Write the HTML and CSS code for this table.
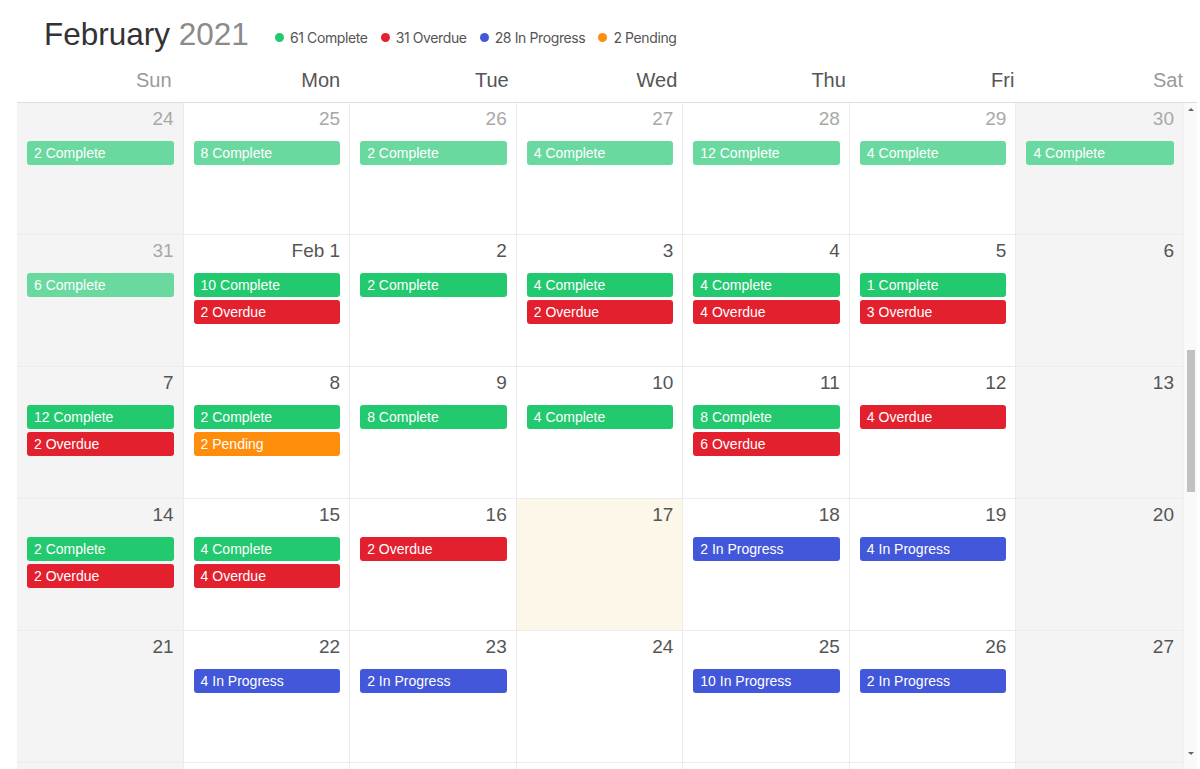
FILE: index.html
```html
<!DOCTYPE html>
<html lang="en">
<head>
<meta charset="utf-8">
<title>February 2021</title>
<link rel="stylesheet" href="styles.css">
</head>
<body>
<div class="app">
  <header class="top">
    <h1 class="title">February <span class="year">2021</span></h1>
    <ul class="legend">
      <li><span class="dot complete"></span>61 Complete</li>
      <li><span class="dot overdue"></span>31 Overdue</li>
      <li><span class="dot progress"></span>28 In Progress</li>
      <li><span class="dot pending"></span>2 Pending</li>
    </ul>
  </header>
  <div class="calendar">
    <div class="dow">
      <div class="dname weekend">Sun</div>
      <div class="dname">Mon</div>
      <div class="dname">Tue</div>
      <div class="dname">Wed</div>
      <div class="dname">Thu</div>
      <div class="dname">Fri</div>
      <div class="dname weekend">Sat</div>
    </div>
    <div class="body">
      <div class="weeks">
        <div class="week">
          <div class="day we other"><div class="num">24</div><div class="ev complete">2 Complete</div></div>
          <div class="day other"><div class="num">25</div><div class="ev complete">8 Complete</div></div>
          <div class="day other"><div class="num">26</div><div class="ev complete">2 Complete</div></div>
          <div class="day other"><div class="num">27</div><div class="ev complete">4 Complete</div></div>
          <div class="day other"><div class="num">28</div><div class="ev complete">12 Complete</div></div>
          <div class="day other"><div class="num">29</div><div class="ev complete">4 Complete</div></div>
          <div class="day we other"><div class="num">30</div><div class="ev complete">4 Complete</div></div>
        </div>
        <div class="week">
          <div class="day we other"><div class="num">31</div><div class="ev complete">6 Complete</div></div>
          <div class="day"><div class="num">Feb 1</div><div class="ev complete">10 Complete</div><div class="ev overdue">2 Overdue</div></div>
          <div class="day"><div class="num">2</div><div class="ev complete">2 Complete</div></div>
          <div class="day"><div class="num">3</div><div class="ev complete">4 Complete</div><div class="ev overdue">2 Overdue</div></div>
          <div class="day"><div class="num">4</div><div class="ev complete">4 Complete</div><div class="ev overdue">4 Overdue</div></div>
          <div class="day"><div class="num">5</div><div class="ev complete">1 Complete</div><div class="ev overdue">3 Overdue</div></div>
          <div class="day we"><div class="num">6</div></div>
        </div>
        <div class="week">
          <div class="day we"><div class="num">7</div><div class="ev complete">12 Complete</div><div class="ev overdue">2 Overdue</div></div>
          <div class="day"><div class="num">8</div><div class="ev complete">2 Complete</div><div class="ev pending">2 Pending</div></div>
          <div class="day"><div class="num">9</div><div class="ev complete">8 Complete</div></div>
          <div class="day"><div class="num">10</div><div class="ev complete">4 Complete</div></div>
          <div class="day"><div class="num">11</div><div class="ev complete">8 Complete</div><div class="ev overdue">6 Overdue</div></div>
          <div class="day"><div class="num">12</div><div class="ev overdue">4 Overdue</div></div>
          <div class="day we"><div class="num">13</div></div>
        </div>
        <div class="week">
          <div class="day we"><div class="num">14</div><div class="ev complete">2 Complete</div><div class="ev overdue">2 Overdue</div></div>
          <div class="day"><div class="num">15</div><div class="ev complete">4 Complete</div><div class="ev overdue">4 Overdue</div></div>
          <div class="day"><div class="num">16</div><div class="ev overdue">2 Overdue</div></div>
          <div class="day today"><div class="num">17</div></div>
          <div class="day"><div class="num">18</div><div class="ev progress">2 In Progress</div></div>
          <div class="day"><div class="num">19</div><div class="ev progress">4 In Progress</div></div>
          <div class="day we"><div class="num">20</div></div>
        </div>
        <div class="week">
          <div class="day we"><div class="num">21</div></div>
          <div class="day"><div class="num">22</div><div class="ev progress">4 In Progress</div></div>
          <div class="day"><div class="num">23</div><div class="ev progress">2 In Progress</div></div>
          <div class="day"><div class="num">24</div></div>
          <div class="day"><div class="num">25</div><div class="ev progress">10 In Progress</div></div>
          <div class="day"><div class="num">26</div><div class="ev progress">2 In Progress</div></div>
          <div class="day we"><div class="num">27</div></div>
        </div>
        <div class="week week-tail">
          <div class="day we"></div>
          <div class="day"></div>
          <div class="day"></div>
          <div class="day"></div>
          <div class="day"></div>
          <div class="day"></div>
          <div class="day we"></div>
        </div>
      </div>
      <div class="scrollbar" aria-hidden="true">
        <span class="arrow up"></span>
        <span class="thumb"></span>
        <span class="arrow down"></span>
      </div>
    </div>
  </div>
</div>
</body>
</html>
```

FILE: styles.css
```css
* { box-sizing: border-box; }

html, body {
  margin: 0;
  padding: 0;
  background: #fff;
}

body {
  font-family: "Liberation Sans", Arial, sans-serif;
  color: #444;
  overflow: hidden;
}

.app {
  padding: 0 3px 0 17px;
}

.top {
  height: 69px;
  display: flex;
  align-items: center;
  padding-left: 27px;
}

.title {
  margin: 0;
  font-size: 31.5px;
  font-weight: 400;
  color: #333;
  line-height: 37px;
  white-space: nowrap;
}

.year {
  color: #8a8a8a;
}

.legend {
  list-style: none;
  margin: 0 0 0 26px;
  padding: 6px 0 0;
  display: flex;
  gap: 13px;
  font-family: Inter, "Liberation Sans", sans-serif;
  font-size: 14px;
  letter-spacing: -0.38px;
  color: #555;
}

.legend li {
  display: flex;
  align-items: center;
  gap: 6px;
}

.dot {
  width: 9px;
  height: 9px;
  border-radius: 50%;
  display: inline-block;
}

.dot.complete { background: #22c96f; }
.dot.overdue { background: #e3202d; }
.dot.progress { background: #4257d9; }
.dot.pending { background: #ff8d0c; }

.dow {
  display: grid;
  grid-template-columns: repeat(7, 1fr);
  border-bottom: 1px solid #dedede;
}

.dname {
  text-align: right;
  font-size: 20px;
  line-height: 23px;
  padding: 0 14px 10px 0;
  color: #555;
}

.dname.weekend {
  color: #9a9a9a;
}

.body {
  height: 666px;
  display: flex;
  overflow: hidden;
}

.weeks {
  flex: 1;
  min-width: 0;
}

.week {
  display: grid;
  grid-template-columns: repeat(7, 1fr);
  height: 132px;
  border-bottom: 1px solid #ececec;
}

.week-tail {
  height: 10px;
  border-bottom: none;
}

.day {
  border-right: 1px solid #ececec;
  padding: 4px 9px 0 10px;
  display: flex;
  flex-direction: column;
  gap: 3px;
  min-width: 0;
}

.day:last-child {
  border-right: none;
}

.day.we {
  background: #f4f4f4;
}

.day.today {
  background: #fdf7ea;
}

.num {
  text-align: right;
  font-size: 19px;
  line-height: 24px;
  color: #555;
  margin-bottom: 7px;
  white-space: nowrap;
}

.day.other .num {
  color: #a8a8a8;
}

.ev {
  height: 24px;
  line-height: 24px;
  border-radius: 3px;
  padding-left: 7px;
  font-size: 14px;
  color: #fff;
  white-space: nowrap;
  overflow: hidden;
}

.ev.complete { background: #22c96f; }
.ev.overdue { background: #e3202d; }
.ev.progress { background: #4257d9; }
.ev.pending { background: #ff8d0c; }

.day.other .ev.complete { background: #6ad9a0; }

.scrollbar {
  width: 14px;
  flex: none;
  background: #f9f9f9;
  border-left: 1px solid #f0f0f0;
  display: flex;
  flex-direction: column;
  align-items: center;
}

.arrow {
  width: 0;
  height: 0;
  border-left: 3px solid transparent;
  border-right: 3px solid transparent;
}

.arrow.up {
  margin-top: 5px;
  border-bottom: 3px solid #666;
}

.arrow.down {
  margin-top: auto;
  margin-bottom: 14px;
  border-top: 3px solid #666;
}

.thumb {
  width: 8px;
  height: 142px;
  margin-top: 239px;
  background: #c1c1c1;
}
```
